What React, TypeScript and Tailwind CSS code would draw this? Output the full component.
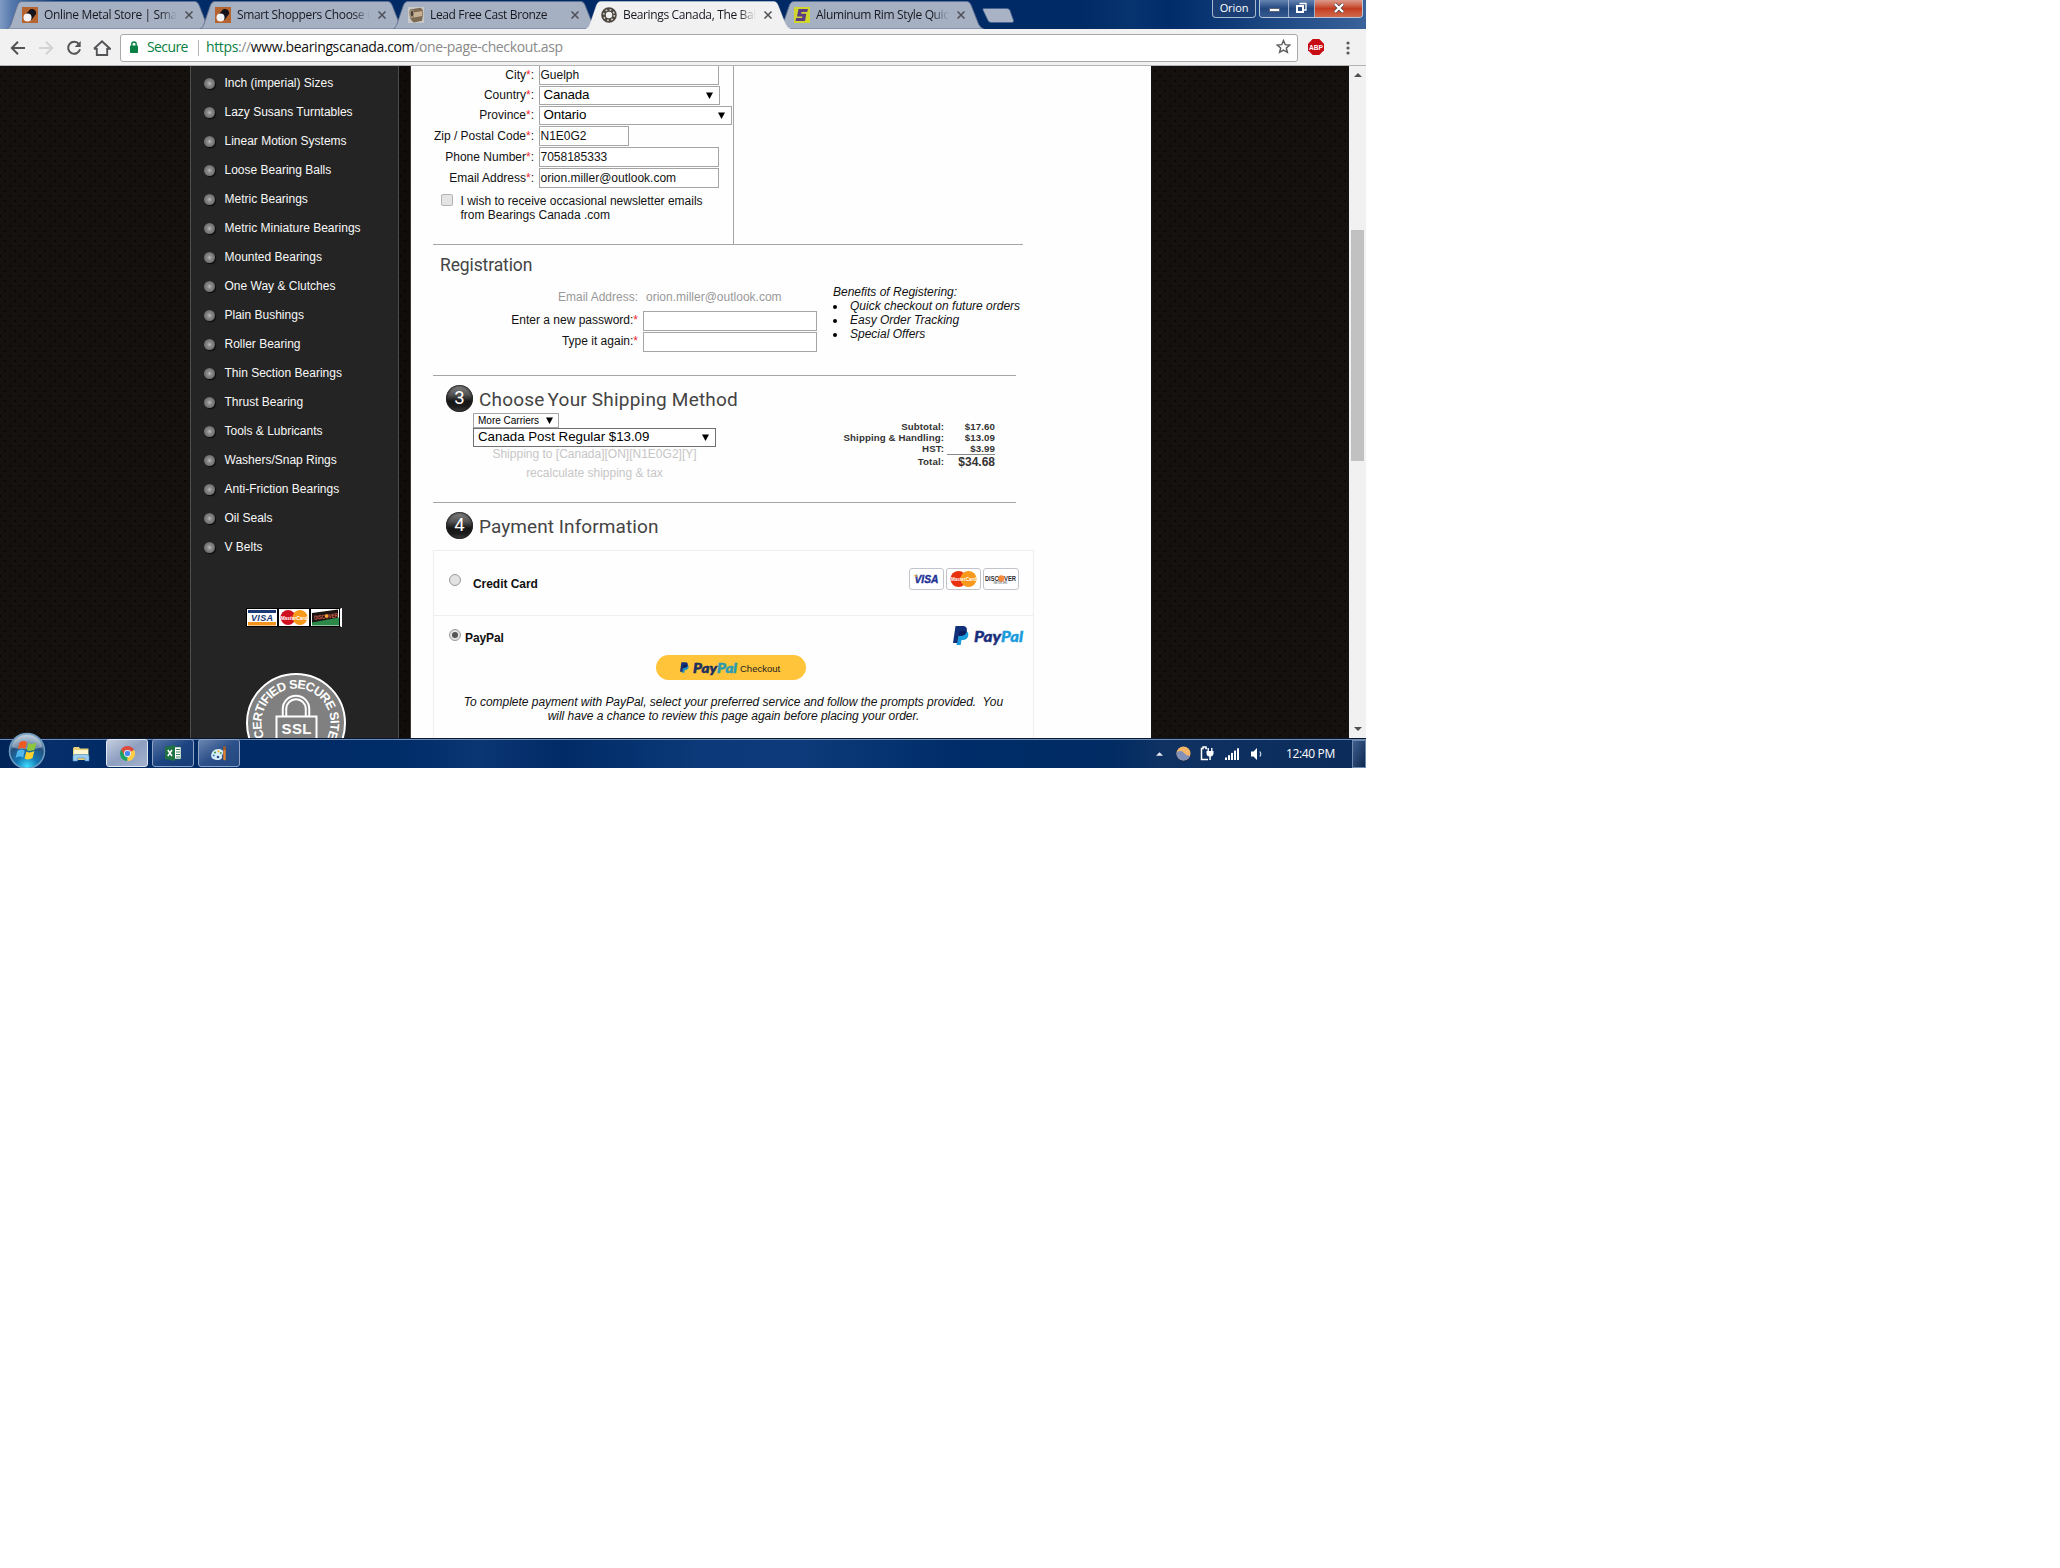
import React from "react";

const ARIAL = "font-['Liberation_Sans',Arial,sans-serif]";
const SEGOE = "font-['Open_Sans','Noto_Sans',sans-serif]";

/* ---------- Tab favicons ---------- */

function MetalIcon() {
  return (
    <svg viewBox="0 0 16 16" className="block size-4">
      <rect width="16" height="16" fill="#b5632f" />
      <path d="M3 8 8 2.500c3-1.500 7 1 6 4.500L9.500 13z" fill="#15121a" />
      <circle cx="5.500" cy="10.500" r="4" fill="#f4f4f6" />
    </svg>
  );
}

function BronzeIcon() {
  return (
    <svg viewBox="0 0 16 16" className="block size-4">
      <rect width="16" height="16" fill="#c9c8c8" />
      <path d="M2 2.500 12 .8c3 1 3.500 4 3 7l-1 6-8 1.700C2 14 .5 6 2 2.500z" fill="#7d6a52" />
      <path d="M5 5.500 14.500 4l-.3 5L6 10.500z" fill="#c7b393" />
      <ellipse cx="4" cy="7" rx="2.200" ry="4.300" fill="#a4927a" />
      <ellipse cx="4" cy="6.500" rx="1.200" ry="2.700" fill="#4a4038" />
    </svg>
  );
}

function BearingIcon() {
  return (
    <svg viewBox="0 0 16 16" className="block size-4">
      <circle cx="8" cy="8" r="5.500" fill="none" stroke="#4c4740" strokeWidth="4.600" />
      <circle cx="8" cy="8" r="5.300" fill="none" stroke="#d4d1cb" strokeWidth="1.600" strokeDasharray="1.700 2.460" />
    </svg>
  );
}

function RimIcon() {
  return (
    <svg viewBox="0 0 16 16" className="block size-4">
      <rect width="16" height="16" fill="#cfd62d" />
      <path d="M4.500 2H14l-.8 3H7.500l-.4 1.800h5.200L11 14H1.500l.7-3h5.900l.4-1.600H3z" fill="#5b3a86" />
    </svg>
  );
}

const TABS = [
  { title: "Online Metal Store | Sma", Icon: MetalIcon },
  { title: "Smart Shoppers Choose O", Icon: MetalIcon },
  { title: "Lead Free Cast Bronze", Icon: BronzeIcon },
  { title: "Bearings Canada, The Bal", Icon: BearingIcon, active: true },
  { title: "Aluminum Rim Style Quic", Icon: RimIcon },
];

function TabStrip() {
  return (
    <div className="relative flex h-[29px] shrink-0 bg-[linear-gradient(90deg,#7f9bc4_0px,#5477ab_12px,#0b3876_60px,#002a66_220px,#002a66_1080px,#07336f_1130px,#002c69_1170px,#0f3c78_1230px,#3a629b_1366px)] pl-[9px]">
      {TABS.map(({ title, Icon, active }, i) => (
        <div key={i} className={active ? "relative z-10 flex w-[193px] items-center pl-[13px] pt-px" : "relative flex w-[193px] items-center pl-[13px] pt-px"}>
          <svg viewBox="0 0 206 28" className="absolute -left-[2px] top-[1px] h-[28px] w-[206px]">
            <path
              d="M0 28C3 26.500 3 25 4 23L10.500 4Q12 .5 14.500 .5H188Q190.500 .5 192 4L199.500 23Q201 26.500 204.500 28z"
              fill={active ? "#f2f1f2" : "#a6b0c3"}
              stroke={active ? "#e6e6ea" : "#5f7190"}
              strokeWidth={active ? 0.4 : 0.9}
            />
          </svg>
          <span className="relative block size-4 shrink-0"><Icon /></span>
          <span className={`relative ml-[6px] w-[134px] whitespace-nowrap text-[12px] leading-[20px] tracking-[-0.36px] text-[#16191f] [mask-image:linear-gradient(to_right,black_116px,transparent_133px)] ${SEGOE}`}>{title}</span>
          <svg viewBox="0 0 8 8" className="relative ml-[7px] size-[8px] shrink-0">
            <path d="M.5.5l7 7m0-7l-7 7" stroke="#4d4f55" strokeWidth="1.500" />
          </svg>
        </div>
      ))}
      <svg viewBox="0 0 32 15" className="ml-[8px] mt-[8px] h-[15px] w-[32px]">
        <path d="M1.500.5H25q2 0 3 2l3.500 10q.5 2-1.500 2H9q-2 0-3-2L1 2Q.5.5 1.500.5z" fill="#aab3c5" stroke="#43618f" strokeWidth=".7" />
      </svg>
      <WindowControls />
    </div>
  );
}

function WindowControls() {
  return (
    <div className="absolute right-[3px] top-0 flex gap-[3px]">
      <div className={`flex h-[18px] w-[44px] items-center justify-center rounded-b-[4px] border border-t-0 border-[#a9b9d2] bg-[#1b3f75] text-[11px] font-medium tracking-[-0.1px] text-white ${SEGOE}`}>Orion</div>
      <div className="flex h-[18px] overflow-hidden rounded-b-[4px] border border-t-0 border-[#b9c6da]">
        <div className="flex w-[29px] items-center justify-center border-r border-[#9fb1cc] bg-linear-to-b from-[#6583b0] via-[#23487f] to-[#34588f]">
          <span className="mt-[3px] h-[4px] w-[11px] rounded-[1px] border border-[#5a6578] bg-white" />
        </div>
        <div className="flex w-[26px] items-center justify-center border-r border-[#9fb1cc] bg-linear-to-b from-[#6583b0] via-[#23487f] to-[#34588f] pr-[2px]">
          <svg viewBox="0 0 12 12" className="-mt-px size-[12px]">
            <path d="M4.500 1.500H11V8H9" fill="none" stroke="#fff" strokeWidth="1.300" />
            <rect x="2" y="4" width="6" height="6" fill="none" stroke="#fff" strokeWidth="2" />
          </svg>
        </div>
        <div className="flex w-[47px] items-center justify-center bg-linear-to-b from-[#dc9a8c] via-[#c33c20] to-[#d2694b]">
          <svg viewBox="0 0 12 10" className="-mt-[2px] h-[10px] w-[12px]">
            <path d="M2 1l8 8M10 1L2 9" stroke="#4a3b45" strokeWidth="3.600" />
            <path d="M2 1l8 8M10 1L2 9" stroke="#fff" strokeWidth="2.400" />
          </svg>
        </div>
      </div>
    </div>
  );
}

function Toolbar() {
  return (
    <div className="flex h-[37px] shrink-0 items-center border-b border-[#b4b3b5] bg-[#f2f1f2] pl-[10px] pt-px">
      <svg viewBox="0 0 16 16" className="size-[16px]"><path d="M15 8H2.500M8 1.800 1.800 8 8 14.200" fill="none" stroke="#535456" strokeWidth="2" /></svg>
      <svg viewBox="0 0 16 16" className="ml-[12px] size-[16px]"><path d="M1 8h12.500M8 1.800 14.200 8 8 14.200" fill="none" stroke="#d3d3d4" strokeWidth="2" /></svg>
      <svg viewBox="0 0 16 16" className="ml-[12px] size-[16px]">
        <path d="M13 4.200A6 6 0 1 0 14 9.300" fill="none" stroke="#535456" strokeWidth="2" />
        <path d="M14.700 1v6H8.700z" fill="#535456" />
      </svg>
      <svg viewBox="0 0 18 16" className="ml-[11px] h-[16px] w-[18px]"><path d="M3.800 8v7h10.400V8M1 8.700 9 1.300l8 7.400H14.200M1 8.700H3.800" fill="none" stroke="#535456" strokeWidth="1.900" /></svg>
      <div className={`ml-[9px] flex h-[28px] w-[1178px] items-center rounded-[3px] border border-[#a9a8aa] bg-white text-[14px] ${SEGOE}`}>
        <svg viewBox="0 0 10 12" className="ml-[8px] h-[12px] w-[10px] -translate-y-px">
          <rect x="1" y="4.500" width="8" height="7.500" rx=".8" fill="#0b8043" />
          <path d="M2.800 5V3.200a2.200 2.200 0 0 1 4.400 0V5" fill="none" stroke="#0b8043" strokeWidth="1.400" />
        </svg>
        <span className="ml-[8px] w-[42px] -translate-y-px whitespace-nowrap tracking-[-0.6px] text-[#0b8043]">Secure</span>
        <span className="ml-[9px] h-[16px] w-px bg-[#b5b5b5]" />
        <span className="ml-[7px] -translate-y-px whitespace-nowrap tracking-[-0.37px] text-[#8a8a8a]">
          <span className="text-[#0b8043]">https</span>://<span className="text-[#111]">www.bearingscanada.com</span>/one-page-checkout.asp
        </span>
        <svg viewBox="0 0 24 24" className="ml-auto mr-[6px] size-[15px] -translate-y-px">
          <path d="M12 2.500l2.800 6.600 7.200.6-5.500 4.700 1.700 7L12 17.700l-6.200 3.700 1.700-7L2 9.700l7.200-.6z" fill="none" stroke="#5c5c5e" strokeWidth="2.300" />
        </svg>
      </div>
      <svg viewBox="0 0 16 16" className="ml-[10px] size-[16px] -translate-y-px">
        <path d="M4.700 0h6.600L16 4.700v6.600L11.300 16H4.700L0 11.300V4.700z" fill="#c70d13" />
        <text x="8" y="10.900" fontSize="8" fontWeight="700" fill="#fff" textAnchor="middle" textLength="14" lengthAdjust="spacingAndGlyphs" fontFamily="Liberation Sans">ABP</text>
      </svg>
      <svg viewBox="0 0 4 14" className="ml-[22px] h-[14px] w-[4px]">
        {[2, 7, 12].map((y) => <circle key={y} cx="2" cy={y} r="1.600" fill="#58595b" />)}
      </svg>
    </div>
  );
}

/* ---------- Sidebar ---------- */

const CATEGORIES = [
  "Inch (imperial) Sizes", "Lazy Susans Turntables", "Linear Motion Systems", "Loose Bearing Balls",
  "Metric Bearings", "Metric Miniature Bearings", "Mounted Bearings", "One Way & Clutches",
  "Plain Bushings", "Roller Bearing", "Thin Section Bearings", "Thrust Bearing", "Tools & Lubricants",
  "Washers/Snap Rings", "Anti-Friction Bearings", "Oil Seals", "V Belts",
];

function SidebarCards() {
  return (
    <svg viewBox="0 0 96 19" className="ml-[55px] mt-[47px] block h-[19px] w-[96px] shrink-0" fontFamily="Liberation Sans">
      <rect width="96" height="19" fill="#000" />
      <rect x="1" y="1" width="30" height="17" fill="#fff" />
      <rect x="2" y="2" width="28" height="3" fill="#1b3a75" />
      <rect x="2" y="14" width="28" height="3.500" fill="#f0941f" />
      <text x="16" y="13" fontSize="9" fontWeight="700" fontStyle="italic" fill="#1b3a75" textAnchor="middle" textLength="22">VISA</text>
      <rect x="33" y="1" width="30" height="17" fill="#fff" />
      <circle cx="42" cy="9.500" r="7.500" fill="#cf1120" />
      <circle cx="54" cy="9.500" r="7.500" fill="#f79a1b" />
      <text x="48" y="12" fontSize="6" fontWeight="700" fontStyle="italic" fill="#fff" textAnchor="middle" textLength="27" lengthAdjust="spacingAndGlyphs">MasterCard</text>
      <rect x="65" y="1" width="30" height="17" fill="#fff" />
      <path d="M66 5l26-3.500v12L66 17z" fill="#1b1413" />
      <path d="M66 14.500l27-5v8H66z" fill="#2b8a4a" />
      <text x="80" y="10.500" fontSize="6" fontWeight="700" fill="#d7634d" textAnchor="middle" textLength="24" lengthAdjust="spacingAndGlyphs" transform="rotate(-6 80 9)">DISCOVER</text>
      <circle cx="80.500" cy="8" r="1.800" fill="#f5a531" />
      <rect x="93" y="1" width="1" height="17" fill="#000" />
      <rect x="94.500" y="0" width="1.500" height="19" fill="#fff" />
    </svg>
  );
}

function SslBadge() {
  return (
    <svg viewBox="0 0 100 100" className="ml-[55px] mt-[46px] block size-[100px] shrink-0" fontFamily="Liberation Sans">
      <circle cx="50" cy="50" r="49" fill="#808080" stroke="#fff" strokeWidth="2" />
      <path id="ssl-arc" d="M22.090 70.280A34.500 34.500 0 1 1 77.910 70.280" fill="none" />
      <text fontSize="12.500" fontWeight="700" fill="#fff" textAnchor="middle" letterSpacing="-0.75">
        <textPath href="#ssl-arc" startOffset="50%">CERTIFIED SECURE SITE</textPath>
      </text>
      <path d="M38.500 43V36a11.500 11.500 0 0 1 23 0v7" fill="none" stroke="#fff" strokeWidth="5.500" />
      <path d="M38.500 43V36a11.500 11.500 0 0 1 23 0v7" fill="none" stroke="#808080" strokeWidth="1.500" />
      <rect x="30.500" y="43.500" width="40" height="32" fill="#808080" stroke="#fff" strokeWidth="2" />
      <text x="50.500" y="61" fontSize="15" fontWeight="700" fill="#fff" textAnchor="middle" textLength="30">SSL</text>
    </svg>
  );
}

function Sidebar() {
  return (
    <aside className="flex w-[209px] shrink-0 flex-col border-x border-[#4d4d4d] bg-[#242424]">
      <ul className="shrink-0 pt-[2px]">
        {CATEGORIES.map((name) => (
          <li key={name} className="flex h-[29px] items-center pl-[13px]">
            <span className="mt-[2px] size-[11px] rounded-full bg-[radial-gradient(circle,#bbb_0,#8a8a8a_30%,#555_100%)] shadow-[1px_1px_1px_#0a0a0a]" />
            <span className="ml-[9.500px] whitespace-nowrap text-[12px] leading-[14px] text-[#f8f8f8]">{name}</span>
          </li>
        ))}
      </ul>
      <SidebarCards />
      <SslBadge />
    </aside>
  );
}

/* ---------- Checkout form ---------- */

function Arrow({ className }: { className: string }) {
  return (
    <svg viewBox="0 0 7 7" className={className}>
      <path d="M0 .5h7L3.500 7z" fill="#000" />
    </svg>
  );
}

function Star() {
  return <span className="text-[#f0282d]">*</span>;
}

function Field({ label, value, width, select }: { label: string; value: string; width: string; select?: boolean }) {
  return (
    <div className="mb-px flex">
      <div className={`w-[106px] whitespace-nowrap pr-[5px] text-right text-[12px] text-[#111] ${select ? "leading-[18px]" : "leading-[20px]"}`}>
        {label}<Star />:
      </div>
      {select ? (
        <div className={`flex h-[19px] items-center border border-[#a5a5a5] bg-white pl-[3.500px] text-[13.33px] leading-[16px] text-black ${width}`}>
          <span className="-mt-px tracking-[-0.15px]">{value}</span><Arrow className="-mt-px ml-auto mr-[6px] size-[7px]" />
        </div>
      ) : (
        <div className={`h-[20px] border border-[#a5a5a5] bg-white pl-[.5px] text-[12px] leading-[18px] text-[#111] ${width}`}>{value}</div>
      )}
    </div>
  );
}

function NumberBall({ n }: { n: string }) {
  return (
    <span className="flex size-[27px] shrink-0 items-center justify-center rounded-full bg-[linear-gradient(180deg,#858585_0%,#555_35%,#161616_60%,#1c1c1c_80%,#444_100%)] shadow-[inset_0_0_2px_1px_#222] font-['Roboto',sans-serif] text-[18.500px] leading-none text-white">{n}</span>
  );
}

function PayPalMark({ className, light }: { className: string; light: string }) {
  return (
    <svg viewBox="0 0 16 19" className={className}>
      <path d="M6 5h6.500c2.500.5 3.300 2.300 2.700 4.700-.7 3-2.700 4.300-5.500 4.300H8.500L7.700 19H3.500z" fill={light} />
      <path d="M2.500 0h7c3.500 0 5 2 4.300 5-.8 3.500-3 4.800-6.300 4.800H5.500L4.300 17H0z" fill="#12307a" />
      <path d="M6.500 5.200c2-.3 5-.4 7.200.3-.9 3-3 4.300-6.200 4.300H5.600z" fill="#0c1f5c" />
    </svg>
  );
}

function CardLogos() {
  return (
    <div className="flex gap-[2px]">
      <svg viewBox="0 0 35 22" className="h-[22px] w-[35px]" fontFamily="Liberation Sans">
        <rect x=".5" y=".5" width="34" height="21" rx="2.500" fill="#fff" stroke="#c3c3cb" />
        <text x="17.500" y="15" fontSize="11" fontWeight="700" fontStyle="italic" fill="#1e3294" stroke="#1e3294" strokeWidth=".4" textAnchor="middle" textLength="24" lengthAdjust="spacingAndGlyphs">VISA</text>
        <path d="M4.500 7h3l1 2.500z" fill="#eda32c" />
      </svg>
      <svg viewBox="0 0 35 22" className="h-[22px] w-[35px]" fontFamily="Liberation Sans">
        <rect x=".5" y=".5" width="34" height="21" rx="2.500" fill="#fff" stroke="#c3c3cb" />
        <circle cx="12.500" cy="11" r="8" fill="#e9310f" />
        <circle cx="22.500" cy="11" r="8" fill="#f8981d" />
        <text x="17.500" y="13.200" fontSize="6" fontWeight="700" fill="#fff" textAnchor="middle" textLength="25" lengthAdjust="spacingAndGlyphs">MasterCard</text>
      </svg>
      <svg viewBox="0 0 36 22" className="h-[22px] w-[36px]" fontFamily="Liberation Sans">
        <rect x=".5" y=".5" width="35" height="21" rx="2.500" fill="#fff" stroke="#c3c3cb" />
        <circle cx="18.200" cy="10.500" r="3.200" fill="#f58a3c" />
        <text x="2" y="13" fontSize="7" fontWeight="700" fill="#2c2c34" textLength="13.500" lengthAdjust="spacingAndGlyphs">DISC</text>
        <text x="21" y="13" fontSize="7" fontWeight="700" fill="#2c2c34" textLength="12" lengthAdjust="spacingAndGlyphs">VER</text>
        <text x="17.500" y="16.300" fontSize="3" fill="#55555c" textAnchor="middle" textLength="14">NETWORK</text>
      </svg>
    </div>
  );
}

const RADIO = "flex size-[12px] shrink-0 items-center justify-center rounded-full border border-[#9a9a9a] bg-[#e2e2e2]";

function Heading({ n, title, track }: { n: string; title: React.ReactNode; track: string }) {
  return (
    <div className="flex h-[27px] items-center pl-[13px]">
      <NumberBall n={n} />
      <h2 className={`ml-[6px] mt-[2px] whitespace-nowrap font-['Roboto',sans-serif] text-[19px] leading-[27px] text-[#444] ${track}`}>{title}</h2>
    </div>
  );
}

function Checkout() {
  return (
    <main className="flex w-[740px] shrink-0 flex-col bg-[#fefefe] pl-[22px]">
      <section className="flex h-[178px] shrink-0">
        <div className="w-[301px] border-r border-[#a5a5a5]">
          <div className="-mt-px">
            <Field label="City" value="Guelph" width="w-[180px]" />
            <Field label="Country" value="Canada" width="w-[181px]" select />
            <Field label="Province" value="Ontario" width="w-[193px]" select />
            <Field label="Zip / Postal Code" value="N1E0G2" width="w-[90px]" />
            <Field label="Phone Number" value="7058185333" width="w-[180px]" />
            <Field label="Email Address" value="orion.miller@outlook.com" width="w-[180px]" />
          </div>
          <div className="mt-[6px] flex pl-[8px]">
            <span className="size-[12px] shrink-0 rounded-[2px] border border-[#b3b3b3] bg-[#e4e4e4]" />
            <p className="ml-[7.500px] whitespace-nowrap text-[12px] leading-[14px] text-[#111]">
              I wish to receive occasional newsletter emails<br />from Bearings Canada .com
            </p>
          </div>
        </div>
      </section>
      <hr className="h-px w-[590px] shrink-0 border-0 bg-[#a5a5a5]" />

      <section className="flex h-[130px] shrink-0">
        <div className="w-[400px] pt-[9px]">
          <h2 className="pl-[7px] font-['Roboto',sans-serif] text-[17.500px] leading-[23px] tracking-[-0.12px] text-[#444]">Registration</h2>
          <div className="mt-[13px] flex text-[12px] leading-[14px] text-[#999]">
            <span className="w-[205px] text-right">Email Address:</span><span className="ml-[8px]">orion.miller@outlook.com</span>
          </div>
          <div className="mt-[7px] flex text-[12px] leading-[19px] text-[#111]">
            <span className="w-[205px] text-right">Enter a new password:<Star /></span><span className="ml-[5px] h-[20px] w-[174px] border border-[#a5a5a5] bg-white" />
          </div>
          <div className="mt-px flex text-[12px] leading-[19px] text-[#111]">
            <span className="w-[205px] text-right">Type it again:<Star /></span><span className="ml-[5px] h-[20px] w-[174px] border border-[#a5a5a5] bg-white" />
          </div>
        </div>
        <div className="pt-[40px] text-[12px] italic leading-[14px] text-[#111]">
          <p>Benefits of Registering:</p>
          <ul>
            {["Quick checkout on future orders", "Easy Order Tracking", "Special Offers"].map((t) => (
              <li key={t} className="flex items-center">
                <span className="mt-[2px] size-[4px] rounded-full bg-black" />
                <span className="ml-[13px] whitespace-nowrap">{t}</span>
              </li>
            ))}
          </ul>
        </div>
      </section>
      <hr className="h-px w-[583px] shrink-0 border-0 bg-[#a5a5a5]" />

      <section className="h-[126px] shrink-0 pt-[9px]">
        <Heading n="3" track="tracking-[0.2px]" title={<>Choose<span className="ml-[3px]">Your Shipping Method</span></>} />
        <div className="flex justify-between pr-[156px]">
          <div className="ml-[40px] mt-[1px] w-[243px]">
            <div className="flex h-[15px] w-[86px] items-center border border-[#a5a5a5] bg-white pl-[4px] text-[10px] leading-[13px] text-black">
              More Carriers<Arrow className="ml-auto mr-[5px] size-[7px]" />
            </div>
            <div className="flex h-[19px] items-center border border-[#707070] bg-white pl-[4px] text-[13.33px] leading-[16px] text-black">
              <span className="-mt-px tracking-[-0.02px]">Canada Post Regular $13.09</span><Arrow className="-mt-px ml-auto mr-[6px] size-[7px]" />
            </div>
            <div className="text-center text-[12px] leading-[14px] text-[#c6c6c6]">
              <p>Shipping to [Canada][ON][N1E0G2][Y]</p>
              <p className="mt-[5px]">recalculate shipping &amp; tax</p>
            </div>
          </div>
          <div className="mt-[9px] text-right text-[9.700px] font-bold leading-[11px] tracking-[0.1px] text-[#333]">
            {[["Subtotal:", "$17.60"], ["Shipping & Handling:", "$13.09"], ["HST:", "$3.99"]].map(([k, v]) => (
              <div key={k} className="flex justify-end"><span>{k}</span><span className="ml-[3px] w-[48px]">{v}</span></div>
            ))}
            <div className="flex items-center justify-end">
              <span>Total:</span>
              <span className="ml-[3px] w-[48px] border-t border-[#888] text-[12px] leading-[14px] tracking-normal">$34.68</span>
            </div>
          </div>
        </div>
      </section>
      <hr className="h-px w-[583px] shrink-0 border-0 bg-[#a5a5a5]" />

      <section className="shrink-0 pt-[9px]">
        <Heading n="4" track="tracking-[0.08px]" title="Payment Information" />
        <div className="mt-[11px] w-[601px] border border-b-0 border-[#eee]">
          <div className="flex h-[65px] border-b border-[#eee] pl-[15px]">
            <span className={`mt-[23px] ${RADIO}`} />
            <span className="ml-[12px] mt-[26px] text-[12px] font-bold leading-[14px] tracking-[-0.05px] text-[#111]">Credit Card</span>
            <div className="ml-auto mr-[14px] mt-[17px]"><CardLogos /></div>
          </div>
          <div className="flex h-[39px] pl-[15px]">
            <span className={`mt-[13px] ${RADIO}`}><span className="size-[6px] rounded-full bg-[#555]" /></span>
            <span className="ml-[4px] mt-[15px] text-[12px] font-bold leading-[14px] tracking-[-0.1px] text-[#111]">PayPal</span>
            <div className="ml-auto mr-[9px] mt-[10px] flex">
              <PayPalMark className="h-[19px] w-[16px]" light="#1a9bdc" />
              <svg viewBox="0 0 50 20" className="ml-[5px] h-[20px] w-[50px]" fontFamily="Lato" fontSize="15.500" fontWeight="900" fontStyle="italic">
                <text x="0" y="15.500" fill="#1a2f7c" stroke="#1a2f7c" strokeWidth=".4" textLength="27" lengthAdjust="spacingAndGlyphs">Pay</text>
                <text x="27" y="15.500" fill="#1a9bdc" stroke="#1a9bdc" strokeWidth=".4" textLength="22" lengthAdjust="spacingAndGlyphs">Pal</text>
              </svg>
            </div>
          </div>
          <div className="ml-[222px] flex h-[25px] w-[150px] items-center rounded-full bg-[#ffc439] pl-[24px]">
            <PayPalMark className="h-[11px] w-[9px]" light="#1a8fc0" />
            <svg viewBox="0 0 45 16" className="ml-[4px] h-[16px] w-[45px]" fontFamily="Lato" fontSize="13.500" fontWeight="900" fontStyle="italic">
              <text x="0" y="12.500" fill="#1d2f5e" stroke="#1d2f5e" strokeWidth=".5" textLength="24" lengthAdjust="spacingAndGlyphs">Pay</text>
              <text x="24" y="12.500" fill="#2a9bb3" stroke="#2a9bb3" strokeWidth=".5" textLength="20" lengthAdjust="spacingAndGlyphs">Pal</text>
            </svg>
            <span className="ml-[2px] mt-[2px] text-[9.500px] leading-[12px] text-[#222]">Checkout</span>
          </div>
          <p className="mt-[15px] h-[60px] whitespace-nowrap text-center text-[12px] italic leading-[14px] tracking-[-0.03px] text-[#111]">
            To complete payment with PayPal, select your preferred service and follow the prompts provided.&nbsp; You<br />
            will have a chance to review this page again before placing your order.
          </p>
        </div>
      </section>
    </main>
  );
}

function ScrollBar() {
  return (
    <div className="flex w-[17px] shrink-0 flex-col items-center bg-[#f1f1f1]">
      <svg viewBox="0 0 8 4" className="mt-[7px] h-[4px] w-[8px]"><path d="M0 4l4-4 4 4z" fill="#505050" /></svg>
      <div className="mt-[153px] h-[231px] w-[13px] bg-[#c1c1c1]" />
      <svg viewBox="0 0 8 4" className="mb-[7px] mt-auto h-[4px] w-[8px]"><path d="M0 0h8L4 4z" fill="#505050" /></svg>
    </div>
  );
}

/* ---------- Taskbar ---------- */

const TASK_BTN = "flex h-[28px] w-[42px] items-center justify-center rounded-[3px] border";

function Taskbar() {
  return (
    <div className="relative flex h-[30px] shrink-0 items-start border-t border-[#061732] bg-[linear-gradient(90deg,#002358_0px,#062f6b_50px,#002a64_110px,#002c68_400px,#0a3674_480px,#002b66_560px,#0b3979_700px,#0c3a7a_800px,#002d69_960px,#002b63_1110px,#0f3263_1160px,#0b2c5a_1366px)] shadow-[inset_0_1px_0_#6f8bb0]">
      <svg viewBox="0 0 40 36" className="absolute -top-[7px] left-[7px] h-[36px] w-[40px]">
        <defs>
          <radialGradient id="orb" cx=".5" cy=".95" r=".9">
            <stop offset="0" stopColor="#3fe0ff" />
            <stop offset=".35" stopColor="#1378b4" />
            <stop offset=".7" stopColor="#24507e" />
            <stop offset="1" stopColor="#9fb6c9" />
          </radialGradient>
        </defs>
        <circle cx="20" cy="19" r="17.500" fill="url(#orb)" stroke="#6d9cc0" strokeWidth="1.500" />
        <path d="M4.500 15C8-1 32-1 35.500 15 28 18 12 18 4.500 15z" fill="#fff" opacity=".35" />
        <path d="M12.500 10.500q3.500-2.500 7.500-.5l-1.700 7q-4-2-7.500.5z" fill="#ee5a24" />
        <path d="M21.500 11q3.500 2 8-.5l-1.700 7q-4.500 2.500-8 .5z" fill="#8cc63f" />
        <path d="M10.300 19q3.500-2.500 7.500-.5l-1.700 7q-4-2-7.500.5z" fill="#4fb6ee" />
        <path d="M19.300 19.500q3.500 2 8-.5l-1.700 7q-4.500 2.500-8 .5z" fill="#fcd22f" />
      </svg>
      <svg viewBox="0 0 18 16" className="ml-[72px] mt-[7px] h-[16px] w-[18px]">
        <path d="M1 2.500 2 1h5l1 1.500h8.500V14H1z" fill="#e8cf7a" />
        <path d="M2 4h14v4H2z" fill="#fff7cf" />
        <path d="M3 8.500h12q2 0 2 2V15h-4v-3H5.500v3H1v-4.500q0-2 2-2z" fill="#9ccdf0" stroke="#4d91c4" strokeWidth=".6" />
      </svg>
      <div className={`ml-[16px] ${TASK_BTN} border-[#dfe6f2] bg-linear-to-br from-[#c5cede] via-[#8e9fc0] to-[#a3b1cd]`}>
        <svg viewBox="0 0 16 16" className="size-[15px]">
          <path d="M8 8 1.070 4A8 8 0 0 1 14.930 4z" fill="#dd4b3e" />
          <path d="M8 8V16A8 8 0 0 1 1.070 4z" fill="#1da462" />
          <path d="M8 8l6.930-4A8 8 0 0 1 8 16z" fill="#fccd43" />
          <path d="M1.070 4 4.900 10 8 8zM14.930 4H8v4z" fill="#dd4b3e" />
          <circle cx="8" cy="8" r="3.700" fill="#fff" /><circle cx="8" cy="8" r="2.900" fill="#4688f1" />
        </svg>
      </div>
      <div className={`ml-[4px] ${TASK_BTN} border-[#8fa3c6] bg-linear-to-br from-[#5674a5] via-[#1c4480] to-[#173c77]`}>
        <svg viewBox="0 0 16 16" className="size-[16px]">
          <rect x="8" y="2" width="8" height="12" fill="#fff" stroke="#1f7244" strokeWidth=".6" />
          <path d="M11 4.500h4M11 7h4M11 9.500h4M11 12h4" stroke="#1f7244" strokeWidth=".9" />
          <path d="M0 2 10 0v16L0 14z" fill="#1f7244" />
          <path d="M2.800 5l4.200 6M7 5l-4.200 6" stroke="#fff" strokeWidth="1.500" />
        </svg>
      </div>
      <div className={`ml-[4px] ${TASK_BTN} border-[#8fa3c6] bg-linear-to-br from-[#6a85b0] via-[#2c5089] to-[#23477f]`}>
        <svg viewBox="0 0 16 16" className="size-[16px]">
          <path d="M7 4c4 0 6 2 5 4.500s-1.500 1.500-1 3-1 3.500-4 3.500-7-1-6.800-4.500S3 4 7 4z" fill="#d9edf7" />
          <circle cx="4" cy="7.500" r="1.100" fill="#3f9b47" /><circle cx="7.500" cy="6.300" r="1.100" fill="#f3b51f" />
          <circle cx="2.800" cy="10.500" r="1.100" fill="#3b86cf" /><circle cx="9.800" cy="8" r="1" fill="#3f9b47" />
          <circle cx="7" cy="12" r="1.300" fill="#2a5088" />
          <path d="M12.300 5h2.400v9.500l-1.200 1-1.200-1z" fill="#e0812c" /><path d="M12 1l1.300 1L15 .8 14.700 5h-2.400z" fill="#a85b25" />
        </svg>
      </div>
      <div className="ml-auto flex h-[29px] items-center">
        <svg viewBox="0 0 8 4" className="mt-px h-[4px] w-[7px]"><path d="M0 4l4-4 4 4z" fill="#e9eef6" /></svg>
        <svg viewBox="0 0 15 15" className="ml-[13px] size-[15px]">
          <circle cx="7.500" cy="7.500" r="7" fill="#f3b567" />
          <path d="M.6 6.500Q5 3.500 8 7t6 3A7 7 0 0 1 .6 6.500z" fill="#8190bb" />
        </svg>
        <svg viewBox="0 0 14 15" className="ml-[9px] h-[15px] w-[14px]">
          <path d="M8 13.500H1.500V2.500H3V1h3v1.500h1" fill="none" stroke="#fff" strokeWidth="1.500" />
          <path d="M6.500 5h7v3q-1 2.500-2.700 2.500V14H9.300v-3.500Q7 10.500 6.500 8z" fill="#fff" />
          <path d="M8.200 2v3M11.800 2v3" stroke="#fff" strokeWidth="1.400" />
        </svg>
        <svg viewBox="0 0 15 12" className="ml-[11px] h-[12px] w-[15px]">
          {[0, 1, 2, 3, 4].map((i) => <rect key={i} x={i * 3} y={9.5 - i * 2.3} width="2" height={2.5 + i * 2.3} fill="#fff" />)}
        </svg>
        <svg viewBox="0 0 12 14" className="ml-[11px] h-[14px] w-[12px]">
          <path d="M0 4.500h2.500L6 1v12L2.500 9.500H0z" fill="#fff" />
          <path d="M8.800 4.500q2 2.500 0 5" fill="none" stroke="#c9d3e3" strokeWidth="1.200" />
        </svg>
        <span className={`ml-[23px] w-[50px] whitespace-nowrap text-[12px] leading-[16px] tracking-[-0.35px] text-white ${SEGOE}`}>12:40 PM</span>
        <div className="ml-[16px] h-[28px] w-[14px] border border-[#6f88ad] bg-linear-to-br from-[#3f5f8e] to-[#0c2850]" />
      </div>
    </div>
  );
}

export default function App() {
  return (
    <div className="min-h-[1568px] w-full bg-white">
      <div className={`flex h-[768px] w-[1366px] flex-col overflow-hidden ${ARIAL}`}>
        <TabStrip />
        <Toolbar />
        <div className="flex h-[672px] shrink-0 overflow-hidden">
          <div className="flex flex-1 overflow-hidden bg-[#15110e] bg-[radial-gradient(circle,#0b0908_0.900px,transparent_1.600px),radial-gradient(circle,#0b0908_0.900px,transparent_1.600px)] bg-[length:10px_10px] bg-[position:0_0,5px_5px] pl-[190px]">
            <Sidebar />
            <div className="w-[12px] shrink-0 border-r border-[#3a3835] bg-black/20" />
            <Checkout />
          </div>
          <ScrollBar />
        </div>
        <Taskbar />
      </div>
    </div>
  );
}
